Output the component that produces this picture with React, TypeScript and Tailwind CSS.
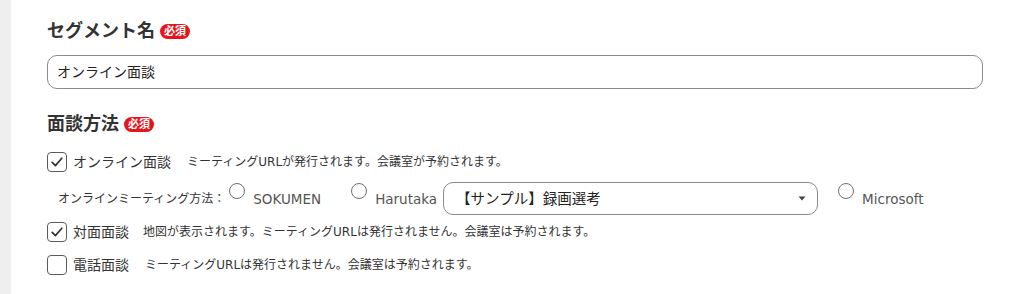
import React from "react";

const FONT = { fontFamily: '"DejaVu Sans", "Noto Sans CJK JP", sans-serif' };

function Badge() {
  return (
    <span className="ml-[5px] inline-flex h-[15px] w-[30px] items-center justify-center rounded-full bg-[#e8141c] text-[11px] font-bold leading-none text-white">
      必須
    </span>
  );
}

function Checkbox({ checked }: { checked: boolean }) {
  return (
    <span className="flex h-[20px] w-[20px] shrink-0 items-center justify-center rounded-[4px] border-[1.5px] border-[#5a5a5a] bg-white">
      {checked && (
        <svg width="14" height="14" viewBox="0 0 14 14" fill="none">
          <path d="M2.2 7.4 L5.4 10.6 L11.8 3.2" stroke="#333" strokeWidth="1.7" strokeLinecap="round" strokeLinejoin="round" />
        </svg>
      )}
    </span>
  );
}

function Radio() {
  return <span className="mt-[1px] block h-[16px] w-[16px] shrink-0 rounded-full border-[1.5px] border-[#6f6f6f] bg-white" />;
}

export default function App() {
  return (
    <div className="flex h-[294px] w-[1013px] bg-white text-[#333]" style={FONT}>
      <div className="w-[11px] shrink-0 bg-[#efefef]" />
      <div className="flex-1 pl-[36px] pr-[30px] pt-[18px]">
        <div className="flex h-[26px] items-center">
          <span className="text-[18px] font-bold leading-[26px] text-[#333]">セグメント名</span>
          <Badge />
        </div>
        <div className="mt-[11px] flex h-[34px] items-center rounded-[10px] border-[1.5px] border-[#8a8a8a] pl-[9px] text-[14px] text-[#222]">
          オンライン面談
        </div>
        <div className="mt-[22px] flex h-[26px] items-center">
          <span className="text-[18px] font-bold leading-[26px] text-[#333]">面談方法</span>
          <Badge />
        </div>

        <div className="mt-[15px] flex h-[20px] items-center">
          <Checkbox checked />
          <span className="ml-[6px] text-[14px] leading-[20px]">オンライン面談</span>
          <span className="ml-[16px] text-[12px] leading-[20px]">ミーティングURLが発行されます。会議室が予約されます。</span>
        </div>

        <div className="mt-[10px] flex h-[33px] items-start pl-[11px]">
          <span className="mt-[8px] text-[12px] leading-[18px]">オンラインミーティング方法：</span>
          <span className="ml-[4px]"><Radio /></span>
          <span className="ml-[8px] mt-[8px] text-[13.5px] leading-[18px] text-[#555]">SOKUMEN</span>
          <span className="ml-[30px]"><Radio /></span>
          <span className="ml-[8px] mt-[8px] text-[13.5px] leading-[18px] text-[#555]">Harutaka</span>
          <div className="ml-[6px] flex h-[33px] w-[375px] items-center justify-between rounded-[10px] border-[1.5px] border-[#8a8a8a] pl-[12px] pr-[11px]">
            <span className="text-[14.5px] leading-[20px] text-[#222]">【サンプル】録画選考</span>
            <svg width="8" height="5" viewBox="0 0 8 5">
              <path d="M0.5 0.5 L7.5 0.5 L4 4.5 Z" fill="#444" />
            </svg>
          </div>
          <span className="ml-[20px]"><Radio /></span>
          <span className="ml-[8px] mt-[8px] text-[13.5px] leading-[18px] text-[#555]">Microsoft</span>
        </div>

        <div className="mt-[7px] flex h-[20px] items-center">
          <Checkbox checked />
          <span className="ml-[6px] text-[14px] leading-[20px]">対面面談</span>
          <span className="ml-[14px] text-[12px] leading-[20px]">地図が表示されます。ミーティングURLは発行されません。会議室は予約されます。</span>
        </div>

        <div className="mt-[13px] flex h-[20px] items-center">
          <Checkbox checked={false} />
          <span className="ml-[6px] text-[14px] leading-[20px]">電話面談</span>
          <span className="ml-[16px] text-[12px] leading-[20px]">ミーティングURLは発行されません。会議室は予約されます。</span>
        </div>
      </div>
    </div>
  );
}
